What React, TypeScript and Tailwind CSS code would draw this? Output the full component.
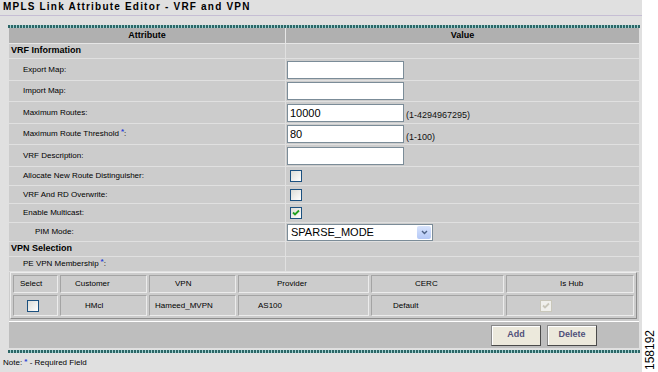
import clsx from "clsx";
import type { ReactNode } from "react";

function Stripe() {
  return (
    <div className="ml-[8px] h-[3px] w-[632px] bg-[repeating-linear-gradient(90deg,#2c6767_0px,#2c6767_2px,#9fcfcf_2px,#9fcfcf_3px)]" />
  );
}

function Req() {
  return <sup className="relative -top-[2px] ml-[2px] text-[8px] font-bold text-[#2b3fd6]">*</sup>;
}

function Checkbox({ checked, disabled }: { checked?: boolean; disabled?: boolean }) {
  return (
    <span
      className={clsx(
        "flex h-[12px] w-[12px] items-center justify-center border",
        disabled
          ? "border-[#c9c7ba] bg-[#f0f0ec]"
          : "border-[#1c5180] bg-[linear-gradient(135deg,#dcdcd7,#ffffff)]"
      )}
    >
      {checked && (
        <svg width="8" height="8" viewBox="0 0 8 8">
          <path
            d="M1 3.5 L3 5.5 L7 1.5"
            fill="none"
            stroke={disabled ? "#c9c7ba" : "#21a121"}
            strokeWidth="1.8"
          />
        </svg>
      )}
    </span>
  );
}

function TextBox({ value = "" }: { value?: string }) {
  return (
    <input
      readOnly
      value={value}
      className="h-[18px] w-[117px] border border-[#7b8c98] bg-white pl-[2px] text-[11px] leading-[16px] text-black outline-none"
    />
  );
}

function Hint({ children }: { children: ReactNode }) {
  return <span className="ml-[2px] mt-[7px] text-[9px] text-[#111]">{children}</span>;
}

interface RowProps {
  label: ReactNode;
  value?: ReactNode;
  h: string;
  kind?: "field" | "section" | "sub";
}

function Row({ label, value, h, kind = "field" }: RowProps) {
  return (
    <div className={clsx("flex border-b border-[#e0e0e0] bg-[#cccccc]", h)}>
      <div
        className={clsx(
          "flex w-[277px] items-center border-r border-[#e0e0e0]",
          kind === "section" && "pl-[2px] text-[9px] font-bold",
          kind === "field" && "pl-[14px] text-[8px]",
          kind === "sub" && "pl-[26px] text-[8px]"
        )}
      >
        {label}
      </div>
      <div className="flex flex-1 items-center pl-[1px]">{value}</div>
    </div>
  );
}

const cols = [
  { name: "Select", hd: "pl-[6px]" },
  { name: "Customer", hd: "pl-[14px]" },
  { name: "VPN", hd: "pl-[25px]" },
  { name: "Provider", hd: "pl-[38px]" },
  { name: "CERC", hd: "pl-[43px]" },
  { name: "Is Hub", hd: "pl-[53px]" },
];

const cell =
  "flex items-center border border-t-[#a4a4a4] border-l-[#a4a4a4] border-b-[#ececec] border-r-[#ececec] text-[8px]";

function MembershipTable() {
  return (
    <div className="grid w-[627px] grid-cols-[45px_87px_87px_131px_133px_128px] grid-rows-[18px_21px] gap-[2px] border border-t-[#eeeeee] border-l-[#eeeeee] border-b-[#8c8c8c] border-r-[#8c8c8c] p-[2px]">
      {cols.map((c) => (
        <div key={c.name} className={clsx(cell, c.hd)}>
          {c.name}
        </div>
      ))}
      <div className={clsx(cell, "pl-[13px]")}>
        <Checkbox />
      </div>
      <div className={clsx(cell, "pl-[24px]")}>HMcl</div>
      <div className={clsx(cell, "pl-[5px]")}>Hameed_MVPN</div>
      <div className={clsx(cell, "pl-[19px]")}>AS100</div>
      <div className={clsx(cell, "pl-[21px]")}>Default</div>
      <div className={clsx(cell, "pl-[33px]")}>
        <Checkbox checked disabled />
      </div>
    </div>
  );
}

function Button({ children }: { children: ReactNode }) {
  return (
    <button className="h-[21px] w-[50px] border border-t-[#8a8a8a] border-l-[#8a8a8a] border-b-[#4a4a4a] border-r-[#4a4a4a] bg-[#ece9dc] text-[9px] font-bold text-[#50507a] shadow-[inset_1px_1px_0_#ffffff]">
      {children}
    </button>
  );
}

export default function App() {
  return (
    <div className="flex h-[372px] w-[658px] overflow-hidden bg-white font-['Liberation_Sans',Arial,sans-serif] text-black">
      <div className="flex w-[642px] flex-col bg-[#e0e0e0]">
        <div className="h-[15px] pl-[3px] pt-[1px] text-[10px] font-bold leading-[12px] tracking-[1.2px]">
          MPLS Link Attribute Editor - VRF and VPN
        </div>
        <div className="h-px bg-[#c6bed4]" />
        <div className="h-[9px]" />
        <Stripe />

        <div className="ml-[9px] w-[630px]">
          <div className="flex h-[16px] border-b border-[#e6e6e6] bg-[#b0b0b0] text-[9px] font-bold">
            <div className="flex w-[277px] items-center justify-center border-r border-[#e6e6e6]">Attribute</div>
            <div className="flex flex-1 items-center justify-center">Value</div>
          </div>
          <Row kind="section" h="h-[15px]" label="VRF Information" />
          <Row h="h-[22px]" label="Export Map:" value={<TextBox />} />
          <Row h="h-[21px]" label="Import Map:" value={<TextBox />} />
          <Row
            h="h-[22px]"
            label="Maximum Routes:"
            value={
              <>
                <TextBox value="10000" />
                <Hint>(1-4294967295)</Hint>
              </>
            }
          />
          <Row
            h="h-[21px]"
            label={
              <>
                Maximum Route Threshold <Req />:
              </>
            }
            value={
              <>
                <TextBox value="80" />
                <Hint>(1-100)</Hint>
              </>
            }
          />
          <Row h="h-[22px]" label="VRF Description:" value={<TextBox />} />
          <Row h="h-[19px]" label="Allocate New Route Distinguisher:" value={<span className="pl-[3px]"><Checkbox /></span>} />
          <Row h="h-[18px]" label="VRF And RD Overwrite:" value={<span className="pl-[3px]"><Checkbox /></span>} />
          <Row h="h-[19px]" label="Enable Multicast:" value={<span className="pl-[3px]"><Checkbox checked /></span>} />
          <Row
            kind="sub"
            h="h-[19px]"
            label="PIM Mode:"
            value={
              <div className="flex h-[17px] w-[146px] items-center border border-[#7b8c98] bg-white">
                <span className="flex-1 pl-[3px] text-[11px] leading-[15px]">SPARSE_MODE</span>
                <span className="m-px flex h-[13px] w-[14px] items-center justify-center rounded-[2px] bg-[linear-gradient(180deg,#d8e4fd,#b4c8f6)]">
                  <svg width="7" height="5" viewBox="0 0 7 5">
                    <path d="M1 1 L3.5 3.5 L6 1" fill="none" stroke="#4d6185" strokeWidth="1.4" />
                  </svg>
                </span>
              </div>
            }
          />
          <Row kind="section" h="h-[15px]" label="VPN Selection" />
          <Row
            h="h-[15px]"
            label={
              <>
                PE VPN Membership <Req />:
              </>
            }
          />
          <div className="h-[50px] border-b border-white bg-[#cccccc] pl-px">
            <MembershipTable />
          </div>
          <div className="flex h-[26px] items-center justify-end gap-[6px] bg-[#bebebe] pr-[42px]">
            <Button>Add</Button>
            <Button>Delete</Button>
          </div>
        </div>

        <div className="h-[2px]" />
        <Stripe />
        <div className="pl-[3px] pt-[4px] text-[8px] leading-[12px]">
          Note: <span className="relative -top-[1px] font-bold text-[#2b3fd6]">*</span> - Required Field
        </div>
      </div>
      <div className="flex flex-1 flex-col items-center justify-end pb-[2px]">
        <span className="rotate-180 text-[12px] leading-[14px] [writing-mode:vertical-rl]">158192</span>
      </div>
    </div>
  );
}
